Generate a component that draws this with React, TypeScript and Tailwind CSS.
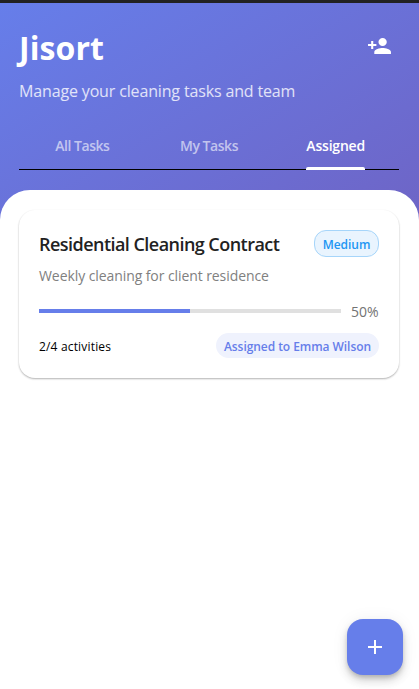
const tabs = [
  { label: 'All Tasks', active: false, spacing: 'tracking-[-0.45px]' },
  { label: 'My Tasks', active: false, spacing: 'tracking-[-0.45px]' },
  { label: 'Assigned', active: true, spacing: 'tracking-[-0.2px]' },
];

function Header() {
  return (
    <header className="h-[187px] px-[19px] pt-[23px] pr-[20px]">
      <div className="flex h-[44px] items-center justify-between">
        <h1 className="text-[32px] leading-[44px] font-bold tracking-[0.1px] text-white">Jisort</h1>
        <button aria-label="Add member" className="mr-[7px] mb-[4px]">
          <svg width="25" height="24" viewBox="0 0 24 24" preserveAspectRatio="none" fill="#fff" className="block">
            <path d="M15 12c2.21 0 4-1.79 4-4s-1.79-4-4-4-4 1.79-4 4 1.79 4 4 4zm-9-2V7H4v3H1v2h3v3h2v-3h3v-2H6zm9 4c-2.67 0-8 1.34-8 4v2h16v-2c0-2.66-5.33-4-8-4z" />
          </svg>
        </button>
      </div>
      <p className="mt-[11px] h-[21px] text-[16px] leading-[21px] tracking-[-0.15px] whitespace-nowrap text-white/80">Manage your cleaning tasks and team</p>
      <nav className="mt-[24px] grid h-[44px] grid-cols-3 border-b border-black">
        {tabs.map((t) => (
          <div key={t.label} className="flex justify-center">
            <div className={`relative h-[44px] text-[14px] leading-[40px] font-semibold whitespace-nowrap ${t.spacing} ${t.active ? 'text-white' : 'text-white/60'}`}>
              {t.label}
              {t.active && <span className="absolute inset-x-0 bottom-0 h-[3px] rounded-t-[2px] bg-white" />}
            </div>
          </div>
        ))}
      </nav>
    </header>
  );
}

function TaskCard() {
  return (
    <article className="h-[168px] rounded-[16px] bg-white px-[20px] pt-[20px] shadow-[0_1px_2px_rgba(0,0,0,0.2),0_1px_2px_rgba(0,0,0,0.12)]">
      <div className="flex h-[27px] items-center justify-between">
        <h2 className="pt-[2px] text-[18px] leading-[27px] font-[550] tracking-[-0.54px] whitespace-nowrap text-[#222]">Residential Cleaning Contract</h2>
        <span className="flex h-[27px] w-[65px] items-center justify-center rounded-[12px] border border-[#a6d5fa] bg-[#e9f4fe] pt-[2px] text-[12px] font-semibold tracking-[-0.05px] text-[#2196f3]">Medium</span>
      </div>
      <p className="mt-[9px] h-[20px] text-[14px] leading-[20px] tracking-[-0.08px] whitespace-nowrap text-[#808080]">Weekly cleaning for client residence</p>
      <div className="mt-[16px] flex h-[20px] items-center">
        <div className="mb-[2px] h-[4px] w-[302px] bg-[#e0e0e0]">
          <div className="h-full w-1/2 bg-[#667eea]" />
        </div>
        <span className="ml-[10px] text-[14px] leading-[20px] text-[#737373]">50%</span>
      </div>
      <div className="mt-[11px] flex h-[25px] items-center justify-between">
        <span className="pt-[2px] text-[12px] tracking-[0.17px] whitespace-nowrap text-black">2/4 activities</span>
        <span className="flex h-[25px] w-[163px] items-center justify-center rounded-full bg-[#eff2fd] pt-[2px] text-[12px] font-semibold tracking-[-0.06px] whitespace-nowrap text-[#667eea]">Assigned to Emma Wilson</span>
      </div>
    </article>
  );
}

export default function App() {
  return (
    <div className="flex h-[689px] w-[419px] flex-col overflow-hidden bg-[#222] pt-[3px] font-['Open_Sans','Noto_Sans',sans-serif]">
      <div className="flex flex-1 flex-col bg-[linear-gradient(148.6deg,#667eea_0%,#764ba2_100%)]">
        <Header />
        <main className="relative flex-1 rounded-t-[30px] bg-white px-[19px] pt-[20px] pr-[20px]">
          <TaskCard />
          <button aria-label="Add task" className="absolute right-[16px] bottom-[14px] flex size-[56px] items-center justify-center rounded-[16px] bg-[#667eea] shadow-[0_3px_5px_-1px_rgba(0,0,0,0.2),0_6px_10px_rgba(0,0,0,0.14),0_1px_18px_rgba(0,0,0,0.06)]">
            <svg width="24" height="24" viewBox="0 0 24 24" fill="#fff">
              <path d="M19 13h-6v6h-2v-6H5v-2h6V5h2v6h6z" />
            </svg>
          </button>
        </main>
      </div>
    </div>
  );
}
